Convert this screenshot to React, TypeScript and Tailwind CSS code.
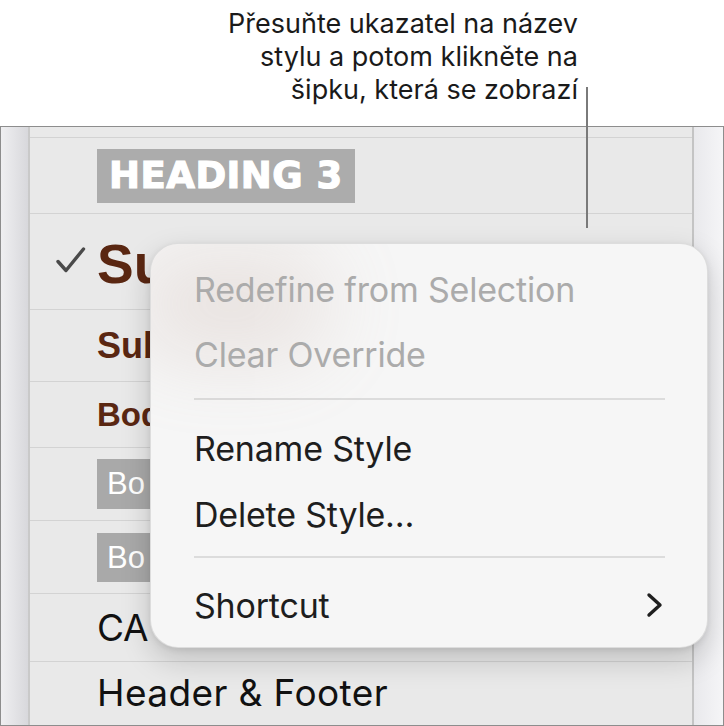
import React from "react"

const rowLine = "border-b border-[#d3d3d3]"

function Check() {
  return (
    <svg width="30" height="28" viewBox="0 0 30 28" className="ml-[26px] mt-[-4px]">
      <path d="M2 15.5 L10 24.5 L27.5 3" fill="none" stroke="#4a4a4a" strokeWidth="3.4" strokeLinecap="round" strokeLinejoin="round" />
    </svg>
  )
}

function Chevron() {
  return (
    <svg width="17" height="26" viewBox="0 0 17 26">
      <path d="M3 3 L14 13 L3 23" fill="none" stroke="#1f1f1f" strokeWidth="3.4" strokeLinecap="round" strokeLinejoin="round" />
    </svg>
  )
}

function StyleRow({ h, check, last, clip, children }: { h: string; check?: boolean; last?: boolean; clip?: boolean; children?: React.ReactNode }) {
  return (
    <div className={`flex items-center ${h} ${last ? "" : rowLine}`}>
      <div className="w-[67px] shrink-0 flex items-center">{check && <Check />}</div>
      {clip ? <div className="w-[56px] overflow-hidden whitespace-nowrap flex items-center">{children}</div> : children}
    </div>
  )
}

function MenuItem({ label, disabled, chevron }: { label: string; disabled?: boolean; chevron?: boolean }) {
  return (
    <div className="h-[66px] flex items-center justify-between pr-[44px]">
      <span className={`text-[34px] tracking-[-0.2px] ${disabled ? "text-[#ababab]" : "text-[#1e1e1e]"}`}>{label}</span>
      {chevron && <Chevron />}
    </div>
  )
}

export default function App() {
  return (
    <div className="relative w-[724px] h-[726px] bg-white overflow-hidden font-['Liberation_Sans',Arial,sans-serif]">
      {/* callout */}
      <div className="h-[126px] pt-[7px] pr-[146px] text-right text-[27px] leading-[33px] text-[#1a1a1a] font-['Inter',sans-serif]">
        <p>Přesuňte ukazatel na název</p>
        <p>stylu a potom klikněte na</p>
        <p>šipku, která se zobrazí</p>
      </div>

      {/* style panel */}
      <div className="flex h-[600px] border border-[#8d8d8d]">
        <div className="w-[29px] shrink-0 bg-gradient-to-r from-[#efeff1] to-[#d8d8dc] border-r-2 border-[#c9c9c9]" />
        <div className="flex-1 bg-[#e9e9e9] flex flex-col">
          <StyleRow h="h-[11px]" />
          <StyleRow h="h-[76px]">
            <span className="bg-[#acacac] text-white font-['DejaVu_Sans',sans-serif] font-bold text-[37px] leading-[54px] px-[12px] tracking-[0.5px] [-webkit-text-stroke:1.2px_white]">
              HEADING 3
            </span>
          </StyleRow>
          <StyleRow h="h-[96px]" check clip>
            <span className="text-[#5a2712] font-bold text-[55px] leading-none mt-[6px]">Su</span>
          </StyleRow>
          <StyleRow h="h-[72px]" clip>
            <span className="text-[#5a2712] font-bold text-[36px] leading-none">Sub</span>
          </StyleRow>
          <StyleRow h="h-[66px]" clip>
            <span className="text-[#5a2712] font-bold text-[33px] leading-none">Bod</span>
          </StyleRow>
          <StyleRow h="h-[73px]" clip>
            <span className="bg-[#a9a9a9] text-white text-[31px] leading-[50px] pl-[10px] pr-[20px]">Bo</span>
          </StyleRow>
          <StyleRow h="h-[73px]" clip>
            <span className="bg-[#a9a9a9] text-white text-[31px] leading-[49px] pl-[10px] pr-[20px]">Bo</span>
          </StyleRow>
          <StyleRow h="h-[68px]" clip>
            <span className="text-[#111] text-[37px] leading-none font-['Inter',sans-serif] tracking-[-0.3px]">CA</span>
          </StyleRow>
          <StyleRow h="h-[61px]" last>
            <span className="text-[#111] text-[37px] leading-none font-['Inter',sans-serif] tracking-[0.4px]">Header &amp; Footer</span>
          </StyleRow>
        </div>
        <div className="w-[31px] shrink-0 bg-gradient-to-r from-[#e9e9ec] to-[#f5f5f7] border-l-2 border-[#c4c4c4]" />
      </div>

      {/* leader line */}
      <div className="absolute left-[586px] top-[87px] w-[2px] h-[141px] bg-[#7a7a7a]" />

      {/* context menu */}
      <div className="absolute left-[150px] top-[243px] w-[558px] h-[405px] rounded-[28px] bg-[#f6f6f6] overflow-hidden border border-black/10 shadow-[0_12px_30px_rgba(0,0,0,0.18),0_2px_6px_rgba(0,0,0,0.08)] pl-[43px] pt-[13px] font-['Inter',sans-serif]">
        <div className="absolute left-[-20px] top-[5px] w-[200px] h-[110px] rounded-full bg-[#b89a8e] opacity-20 blur-2xl" />
        <div className="relative h-[65px] flex items-center">
          <span className="text-[34px] tracking-[-0.2px] text-[#ababab]">Redefine from Selection</span>
        </div>
        <div className="relative h-[65px] flex items-center">
          <span className="text-[34px] tracking-[-0.2px] text-[#ababab]">Clear Override</span>
        </div>
        <div className="pt-[11px] pb-[15px] pr-[42px]">
          <div className="h-[2px] bg-[#dcdcdc]" />
        </div>
        <MenuItem label="Rename Style" />
        <MenuItem label="Delete Style…" />
        <div className="pt-[9px] pb-[14px] pr-[42px]">
          <div className="h-[2px] bg-[#dcdcdc]" />
        </div>
        <MenuItem label="Shortcut" chevron />
      </div>
    </div>
  )
}
